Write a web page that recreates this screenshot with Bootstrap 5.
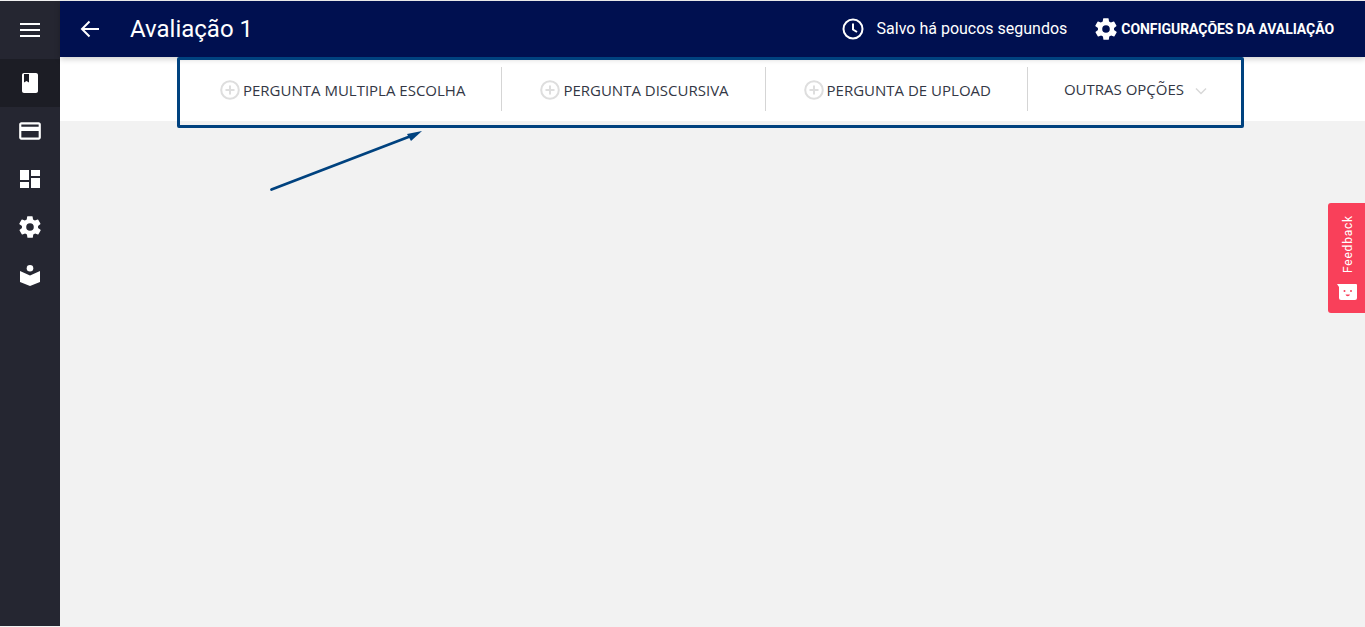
<!DOCTYPE html>
<html lang="pt-BR">

<head>
    <meta charset="UTF-8">
    <meta name="viewport" content="width=device-width, initial-scale=1.0">
    <link href="https://cdn.jsdelivr.net/npm/bootstrap@5.3.1/dist/css/bootstrap.min.css" rel="stylesheet">
    <title>Avaliação 1</title>
    <style>
        html, body { height: 100%; overflow: hidden; }
        body { background: #f2f2f2; font-family: Roboto, sans-serif; padding-top: 1px; }
        .app-shell { height: 625px; }
        .side-rail { width: 60px; background: #252631; flex: none; }
        .rail-item { height: 48px; color: #fff; }
        .rail-top { height: 58px; }
        .rail-active { background: #1c1d25; }
        .top-bar { height: 56px; background: #001050; color: #fff; box-shadow: 0 2px 6px rgba(0,0,0,.2); position: relative; z-index: 2; padding: 0 31px 0 20px; }
        .page-name { font-size: 24px; margin-left: 30px; line-height: 1; }
        .save-note { font-size: 16px; margin-left: 13px; margin-right: 26px; }
        .config-link { font-size: 14px; font-weight: 700; margin-left: 2px; letter-spacing: -.06px; }
        .tool-strip { height: 64px; background: #fff; padding-left: 122px; }
        .tool-item { font-family: "Open Sans", sans-serif; font-size: 15px; color: #333745; height: 44px; margin-top: 10px; border-right: 1px solid #d5d5d5; padding: 2px 36px 0 38px; white-space: nowrap; }
        .tool-item:last-child { border-right: 0; padding: 0 0 0 36px; }
        .tool-item svg { margin-right: 3px; }
        .tool-item .more-chevron { margin: 3px 0 0 11px; }
        .hint-box { position: absolute; left: 177px; top: 57px; width: 1067px; height: 71px; border: 3px solid #00427f; border-radius: 2px; z-index: 3; pointer-events: none; }
        .hint-arrow { position: absolute; left: 265px; top: 125px; z-index: 3; }
        .feedback-tab { position: absolute; right: 0; top: 203px; width: 37px; height: 110px; background: #f9405a; border-radius: 3px 0 0 3px; color: #fff; }
        .feedback-word { writing-mode: vertical-rl; transform: rotate(180deg); font-size: 12px; letter-spacing: .8px; position: absolute; left: 13px; top: 12px; line-height: 14px; }
        .feedback-face { position: absolute; left: 9px; top: 81px; }
    </style>
</head>

<body>
    <div class="app-shell d-flex">
        <!-- Left rail -->
        <nav class="side-rail d-flex flex-column">
            <div class="rail-top rail-item d-flex align-items-center justify-content-center">
                <svg width="20" height="14" viewBox="0 0 20 14" fill="#fff"><rect y="0" width="20" height="2"/><rect y="6" width="20" height="2"/><rect y="12" width="20" height="2"/></svg>
            </div>
            <div class="rail-item rail-active d-flex align-items-center justify-content-center">
                <svg width="24" height="24" viewBox="0 0 24 24"><path fill="#fff" fill-rule="evenodd" d="M18 2H6c-1.100 0-2 .9-2 2v16c0 1.100.9 2 2 2h12c1.100 0 2-.9 2-2V4c0-1.100-.9-2-2-2zM6 3v8.500l2.500-1.500 2.500 1.500V3z"/></svg>
            </div>
            <div class="rail-item d-flex align-items-center justify-content-center">
                <svg width="26" height="26" viewBox="0 0 24 24"><path fill="#fff" fill-rule="evenodd" d="M20 4H4c-1.110 0-1.990.89-1.990 2L2 18c0 1.110.89 2 2 2h16c1.110 0 2-.89 2-2V6c0-1.110-.89-2-2-2zm0 14H4v-6h16zm0-10H4V6h16z"/></svg>
            </div>
            <div class="rail-item d-flex align-items-center justify-content-center">
                <svg width="20" height="18" viewBox="0 0 20 18" fill="#fff"><rect width="9" height="10"/><rect y="12" width="9" height="6"/><rect x="11" width="9" height="6"/><rect x="11" y="8" width="9" height="10"/></svg>
            </div>
            <div class="rail-item d-flex align-items-center justify-content-center">
                <svg width="26" height="26" viewBox="0 0 24 24"><path fill="#fff" d="M19.400 13a7.500 7.500 0 0 0 0-2l2.100-1.600a.5.500 0 0 0 .1-.6l-2-3.500a.5.500 0 0 0-.6-.2l-2.500 1a7.300 7.300 0 0 0-1.700-1l-.4-2.700a.5.500 0 0 0-.5-.4h-4a.5.500 0 0 0-.5.400l-.4 2.700a7.300 7.300 0 0 0-1.700 1l-2.500-1a.5.500 0 0 0-.6.2l-2 3.500a.5.500 0 0 0 .1.600L4.600 11a7.500 7.500 0 0 0 0 2l-2.100 1.600a.5.500 0 0 0-.1.600l2 3.500a.5.500 0 0 0 .6.2l2.500-1a7.300 7.300 0 0 0 1.700 1l.4 2.700a.5.500 0 0 0 .5.400h4a.5.500 0 0 0 .5-.4l.4-2.700a7.300 7.300 0 0 0 1.700-1l2.500 1a.5.500 0 0 0 .6-.2l2-3.500a.5.500 0 0 0-.1-.6zM12 15.500a3.500 3.500 0 1 1 0-7 3.500 3.500 0 0 1 0 7z"/></svg>
            </div>
            <div class="rail-item d-flex align-items-center justify-content-center">
                <svg width="20" height="21" viewBox="0 0 20 21" fill="#fff"><circle cx="10" cy="3.300" r="3.300"/><path d="M0 6 10 10.500 20 6v11L10 21 0 17z"/></svg>
            </div>
        </nav>

        <div class="flex-grow-1 d-flex flex-column">
            <!-- Header -->
            <header class="top-bar d-flex align-items-center">
                <svg width="20" height="18" viewBox="0 0 20 18" fill="none" stroke="#fff" stroke-width="2"><path d="M19 9H2M9.500 1.500 2 9l7.500 7.500"/></svg>
                <div class="page-name">Avaliação 1</div>
                <div class="ms-auto d-flex align-items-center">
                    <svg width="22" height="22" viewBox="0 0 22 22" fill="none" stroke="#fff" stroke-width="2"><circle cx="11" cy="11" r="9.500"/><path d="M11 5.500V11.500l4 2.500"/></svg>
                    <span class="save-note">Salvo há poucos segundos</span>
                    <svg width="26" height="26" viewBox="0 0 24 24"><path fill="#fff" d="M19.400 13a7.500 7.500 0 0 0 0-2l2.100-1.600a.5.500 0 0 0 .1-.6l-2-3.500a.5.500 0 0 0-.6-.2l-2.500 1a7.300 7.300 0 0 0-1.700-1l-.4-2.700a.5.500 0 0 0-.5-.4h-4a.5.500 0 0 0-.5.400l-.4 2.700a7.300 7.300 0 0 0-1.700 1l-2.500-1a.5.500 0 0 0-.6.2l-2 3.500a.5.500 0 0 0 .1.600L4.600 11a7.500 7.500 0 0 0 0 2l-2.100 1.600a.5.500 0 0 0-.1.600l2 3.500a.5.500 0 0 0 .6.2l2.500-1a7.300 7.300 0 0 0 1.700 1l.4 2.700a.5.500 0 0 0 .5.400h4a.5.500 0 0 0 .5-.4l.4-2.700a7.300 7.300 0 0 0 1.700-1l2.500 1a.5.500 0 0 0 .6-.2l2-3.500a.5.500 0 0 0-.1-.6zM12 15.500a3.500 3.500 0 1 1 0-7 3.500 3.500 0 0 1 0 7z"/></svg>
                    <span class="config-link">CONFIGURAÇÕES DA AVALIAÇÃO</span>
                </div>
            </header>

            <!-- Toolbar -->
            <div class="tool-strip d-flex align-items-start">
                <div class="tool-item d-flex align-items-center">
                    <svg width="20" height="20" viewBox="0 0 20 20" fill="none" stroke="#dedede" stroke-width="2"><circle cx="10" cy="10" r="8.800"/><path d="M10 5.500v9M5.500 10h9"/></svg>
                    PERGUNTA MULTIPLA ESCOLHA
                </div>
                <div class="tool-item d-flex align-items-center">
                    <svg width="20" height="20" viewBox="0 0 20 20" fill="none" stroke="#dedede" stroke-width="2"><circle cx="10" cy="10" r="8.800"/><path d="M10 5.500v9M5.500 10h9"/></svg>
                    PERGUNTA DISCURSIVA
                </div>
                <div class="tool-item d-flex align-items-center">
                    <svg width="20" height="20" viewBox="0 0 20 20" fill="none" stroke="#dedede" stroke-width="2"><circle cx="10" cy="10" r="8.800"/><path d="M10 5.500v9M5.500 10h9"/></svg>
                    PERGUNTA DE UPLOAD
                </div>
                <div class="tool-item d-flex align-items-center">
                    OUTRAS OPÇÕES
                    <svg class="more-chevron" width="12" height="8" viewBox="0 0 12 8" fill="none" stroke="#d8d8d8" stroke-width="1.500"><path d="m1 1.500 5 5 5-5"/></svg>
                </div>
            </div>
        </div>
    </div>

    <!-- Annotation over the page -->
    <div class="hint-box"></div>
    <svg class="hint-arrow" width="165" height="70" viewBox="0 0 165 70" fill="#00427f"><path d="M6.500 64.500 146 11" stroke="#00427f" stroke-width="2.800" stroke-linecap="round"/><path d="M157 6 142 9l4 7z"/></svg>

    <!-- Feedback tab -->
    <div class="feedback-tab">
        <span class="feedback-word">Feedback</span>
        <svg class="feedback-face" width="20" height="16" viewBox="0 0 20 16"><path fill="#fff" d="M0 0 19 0a1 1 0 0 1 1 1v13a2 2 0 0 1-2 2H4a2 2 0 0 1-2-2V3z"/><circle cx="7.500" cy="7" r="1" fill="#f9405a"/><circle cx="14" cy="7" r="1" fill="#f9405a"/><path d="M8.500 10.500h4.500a2.300 2.300 0 0 1-4.500 0z" fill="#f9405a"/></svg>
    </div>

    <script src="https://cdn.jsdelivr.net/npm/bootstrap@5.3.1/dist/js/bootstrap.bundle.min.js"></script>
</body>

</html>
